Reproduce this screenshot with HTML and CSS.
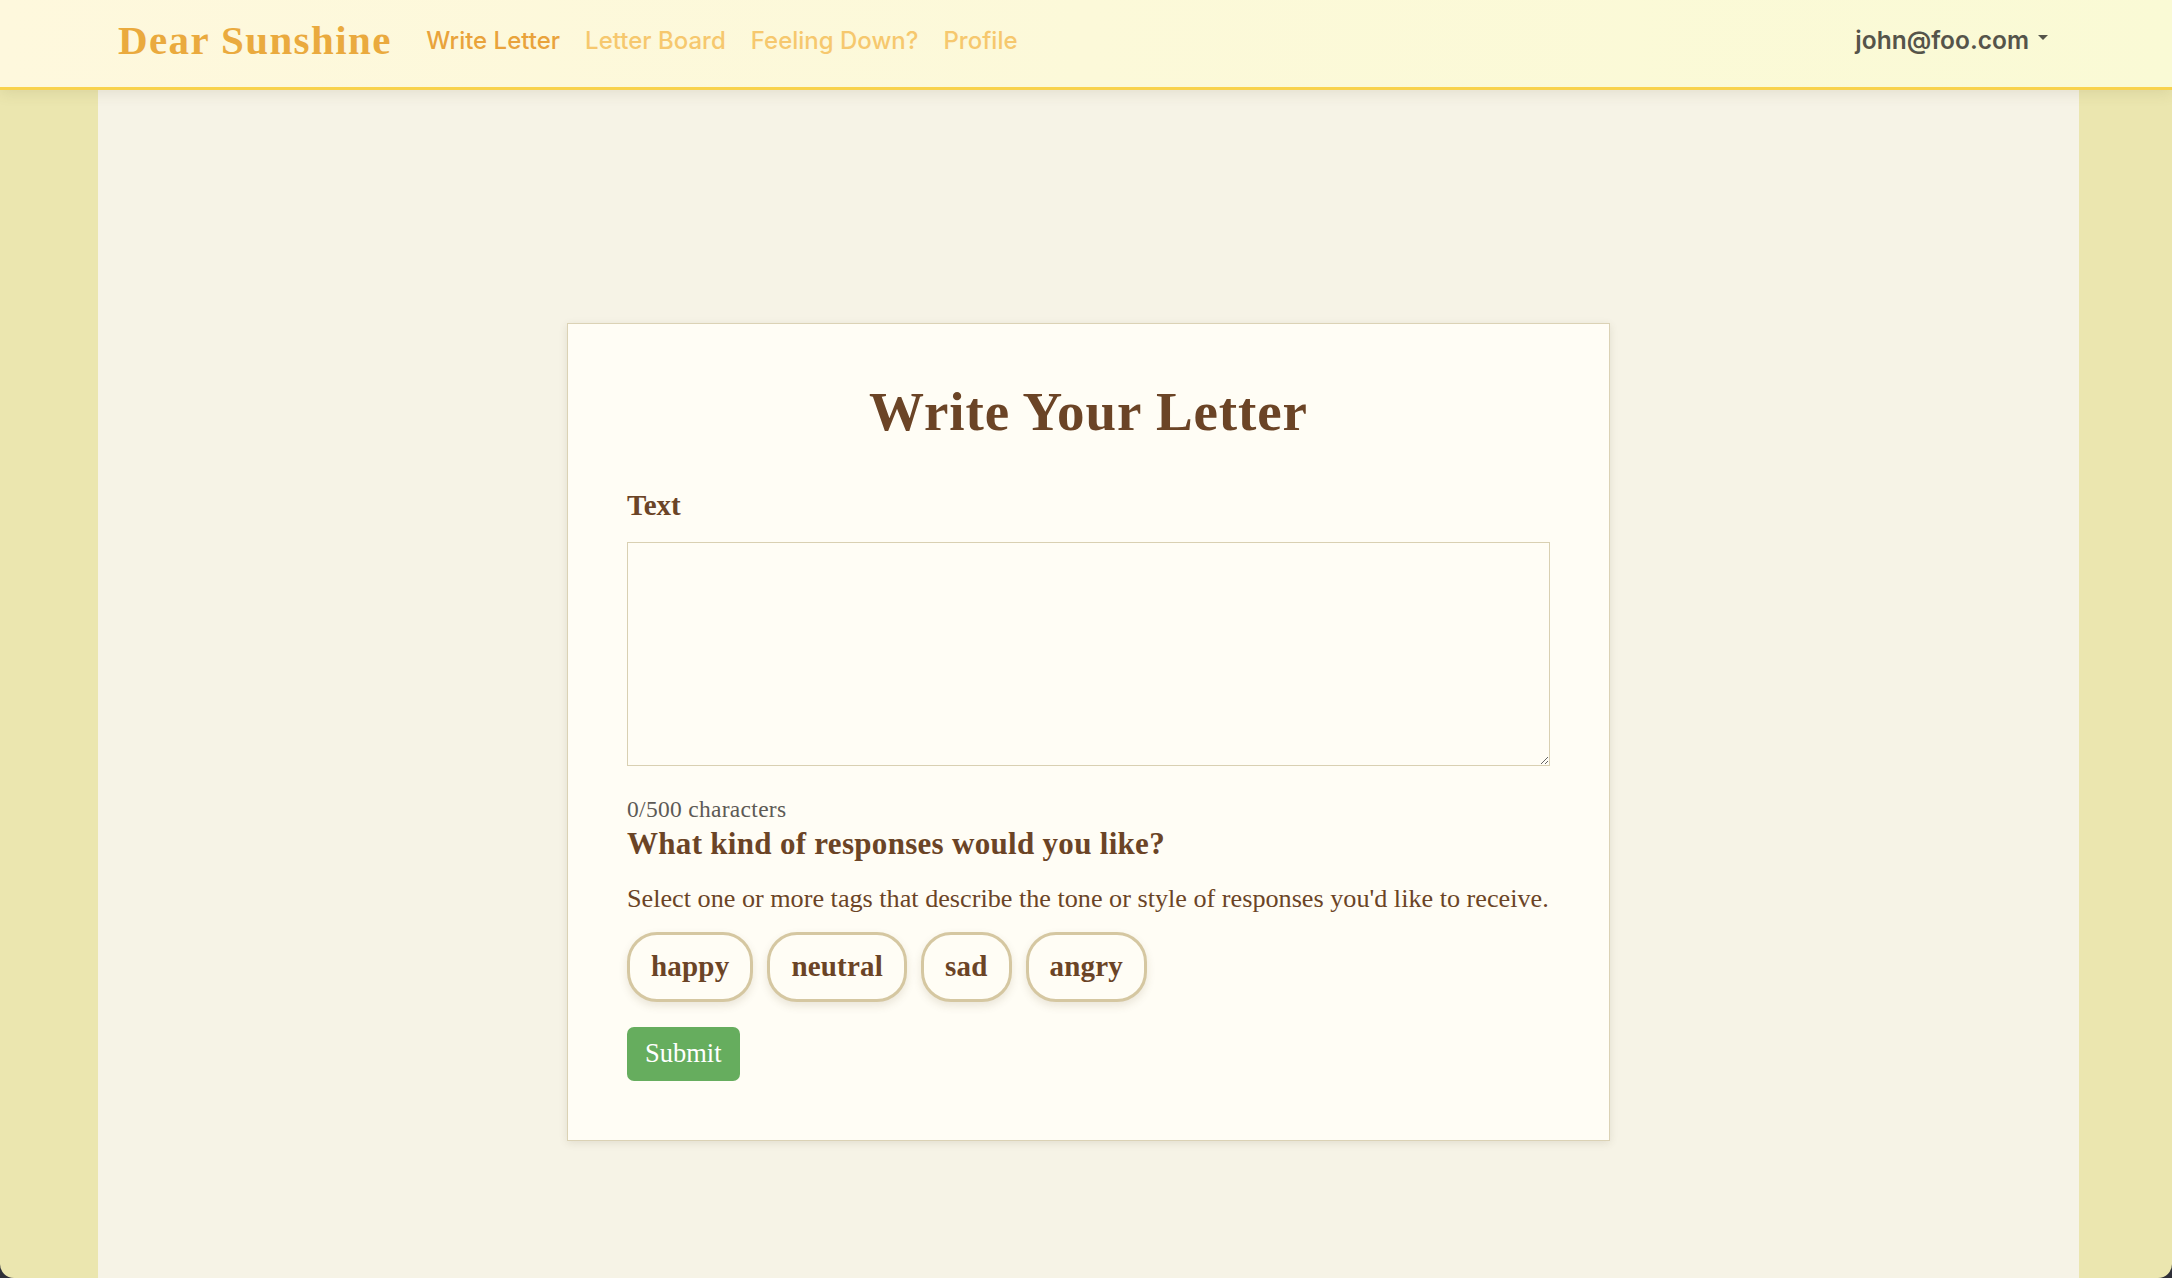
FILE: index.html
```html
<!DOCTYPE html>
<html lang="en">
<head>
<meta charset="utf-8">
<title>Dear Sunshine - Write Letter</title>
<link rel="stylesheet" href="styles.css">
</head>
<body>
  <nav class="navbar">
    <div class="nav-left">
      <a class="brand" href="#">Dear Sunshine</a>
      <ul class="nav-links">
        <li><a class="nav-link active" href="#">Write Letter</a></li>
        <li><a class="nav-link" href="#">Letter Board</a></li>
        <li><a class="nav-link" href="#">Feeling Down?</a></li>
        <li><a class="nav-link" href="#">Profile</a></li>
      </ul>
    </div>
    <a class="user-menu" href="#">john@foo.com<span class="caret"></span></a>
  </nav>
  <main class="page">
    <section class="card">
      <h1 class="card-title">Write Your Letter</h1>
      <label class="field-label" for="letter">Text</label>
      <textarea id="letter" class="letter-input"></textarea>
      <div class="char-count">0/500 characters</div>
      <h2 class="question">What kind of responses would you like?</h2>
      <p class="hint">Select one or more tags that describe the tone or style of responses you'd like to receive.</p>
      <div class="tags">
        <button class="tag" type="button">happy</button>
        <button class="tag" type="button">neutral</button>
        <button class="tag" type="button">sad</button>
        <button class="tag" type="button">angry</button>
      </div>
      <button class="submit" type="button">Submit</button>
    </section>
  </main>
</body>
</html>
```
FILE: styles.css
```css
html {
  background: #2f3038;
  height: 100%;
}
body {
  margin: 0;
  height: 100vh;
  overflow: hidden;
  display: flex;
  flex-direction: column;
  background: #ebe6af;
  border-radius: 0 0 14px 14px;
  font-family: "Liberation Serif", "Times New Roman", serif;
  color: #6b4426;
}
.navbar {
  position: relative;
  z-index: 2;
  flex: 0 0 auto;
  height: 90px;
  box-sizing: border-box;
  border-bottom: 3px solid #f8d24c;
  background: linear-gradient(90deg, #fef8dd 0%, #fcf9d9 50%, #fafad5 100%);
  box-shadow: 0 3px 14px rgba(90, 80, 40, 0.12);
  display: flex;
  align-items: center;
  justify-content: space-between;
  padding: 0 124px 7px 118px;
}
.nav-left {
  display: flex;
  align-items: center;
}
.brand {
  font-family: "Liberation Serif", serif;
  font-weight: 700;
  font-size: 41px;
  letter-spacing: 1.4px;
  color: #eaaa3e;
  text-decoration: none;
  margin-right: 22px;
}
.nav-links {
  display: flex;
  list-style: none;
  margin: 0;
  padding: 0;
}
.nav-link {
  display: block;
  padding: 0 12.5px;
  font-family: Inter, "Liberation Sans", sans-serif;
  font-weight: 500;
  font-size: 24px;
  color: #f6c86e;
  text-decoration: none;
}
.nav-link.active {
  color: #e9a33b;
}
.user-menu {
  font-family: Inter, "Liberation Sans", sans-serif;
  font-weight: 600;
  font-size: 24.5px;
  color: #55544a;
  text-decoration: none;
  display: flex;
  align-items: center;
}
.caret {
  display: inline-block;
  margin-left: 9px;
  margin-top: -5px;
  border-top: 5px solid #55544a;
  border-left: 5px solid transparent;
  border-right: 5px solid transparent;
}
.page {
  flex: 1 1 auto;
  margin: 0 93px 0 98px;
  background: #f6f3e6;
  padding-top: 233px;
}
.card {
  width: 1043px;
  box-sizing: border-box;
  margin: 0 auto;
  background: #fffdf5;
  border: 1px solid #dbd2b5;
  box-shadow: 0 2px 8px rgba(80, 70, 40, 0.12);
  padding: 55px 59px 59px;
  display: flex;
  flex-direction: column;
  align-items: flex-start;
}
.card-title {
  align-self: stretch;
  text-align: center;
  margin: 0;
  font-size: 55px;
  line-height: 66px;
  letter-spacing: 0.9px;
  font-weight: 700;
  color: #6b4426;
}
.field-label {
  margin-top: 42px;
  font-size: 29px;
  line-height: 36px;
  font-weight: 700;
}
.letter-input {
  margin-top: 19px;
  width: 923px;
  height: 224px;
  box-sizing: border-box;
  border: 1px solid #d9d0b2;
  border-radius: 0;
  background: #fffdf5;
  font-family: inherit;
  font-size: 22px;
  padding: 8px 12px;
  outline: none;
}
.char-count {
  margin-top: 28.6px;
  font-size: 23.5px;
  line-height: 28px;
  letter-spacing: 0.3px;
  color: #5d5a55;
}
.question {
  margin: 3.4px 0 0;
  font-size: 31px;
  line-height: 36px;
  letter-spacing: 0.3px;
  font-weight: 700;
}
.hint {
  margin: 20.6px 0 0;
  font-size: 26.2px;
  line-height: 32px;
}
.tags {
  margin-top: 17.4px;
  display: flex;
  gap: 14px;
}
.tag {
  height: 70px;
  box-sizing: border-box;
  padding: 0 21px;
  border: 3px solid #d5c7a1;
  border-radius: 30px;
  background: #fffdf5;
  box-shadow: 0 4px 8px rgba(90, 70, 30, 0.13);
  font-family: "Liberation Serif", serif;
  font-weight: 700;
  font-size: 29px;
  letter-spacing: 0.2px;
  color: #6b4426;
  cursor: pointer;
}
.submit {
  margin-top: 25px;
  height: 54px;
  box-sizing: border-box;
  padding: 0 18px;
  border: none;
  border-radius: 7px;
  background: #66ad5e;
  color: #ffffff;
  font-family: "Liberation Serif", serif;
  font-size: 26.5px;
  cursor: pointer;
}
```
